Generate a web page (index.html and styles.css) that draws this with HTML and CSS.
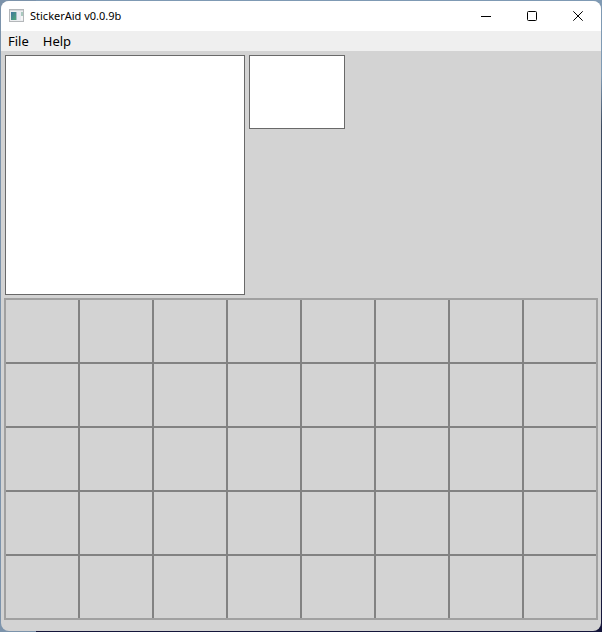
FILE: index.html
```html
<!DOCTYPE html>
<html lang="en">
<head>
<meta charset="utf-8">
<title>StickerAid v0.0.9b</title>
<link rel="stylesheet" href="styles.css">
</head>
<body>
<div class="window">
  <header class="titlebar">
    <svg class="app-icon" viewBox="0 0 16 14" width="16" height="14" aria-hidden="true">
      <defs>
        <linearGradient id="pane" x1="0" y1="0" x2="1" y2="1">
          <stop offset="0" stop-color="#3f74a0"/>
          <stop offset="1" stop-color="#4fa878"/>
        </linearGradient>
      </defs>
      <rect x="0.5" y="0.5" width="14" height="12" fill="#eceef0" stroke="#b4b7ba"/>
      <path d="M1 1.500h13" stroke="#d5d8dc"/>
      <rect x="2" y="3" width="5" height="8" fill="url(#pane)"/>
      <rect x="7" y="3" width="1" height="8" fill="#a9bdc8"/>
      <rect x="8" y="3" width="4" height="8" fill="#e9ebf2"/>
      <rect x="12" y="3" width="2" height="4" fill="#a9c9be"/>
      <rect x="12" y="7" width="2" height="4" fill="#f6f6f6"/>
    </svg>
    <h1 class="title">StickerAid v0.0.9b</h1>
    <div class="controls">
      <button class="control" type="button" aria-label="Minimize">
        <svg viewBox="0 0 10 10" width="10" height="10"><path d="M0 5.500h10"/></svg>
      </button>
      <button class="control" type="button" aria-label="Maximize">
        <svg viewBox="0 0 10 10" width="10" height="10"><rect x="0.5" y="0.5" width="9" height="9" rx="1"/></svg>
      </button>
      <button class="control" type="button" aria-label="Close">
        <svg viewBox="0 0 10 10" width="10" height="10"><path d="M0.300 0.300l9.400 9.400M9.700 0.300l-9.400 9.400"/></svg>
      </button>
    </div>
  </header>
  <nav class="menubar">
    <button class="menu" type="button">File</button>
    <button class="menu" type="button">Help</button>
  </nav>
  <main class="content">
    <div class="previews">
      <div class="preview preview-large"></div>
      <div class="preview preview-small"></div>
    </div>
    <div class="stickers">
      <div class="cell"></div><div class="cell"></div><div class="cell"></div><div class="cell"></div><div class="cell"></div><div class="cell"></div><div class="cell"></div><div class="cell"></div>
      <div class="cell"></div><div class="cell"></div><div class="cell"></div><div class="cell"></div><div class="cell"></div><div class="cell"></div><div class="cell"></div><div class="cell"></div>
      <div class="cell"></div><div class="cell"></div><div class="cell"></div><div class="cell"></div><div class="cell"></div><div class="cell"></div><div class="cell"></div><div class="cell"></div>
      <div class="cell"></div><div class="cell"></div><div class="cell"></div><div class="cell"></div><div class="cell"></div><div class="cell"></div><div class="cell"></div><div class="cell"></div>
      <div class="cell"></div><div class="cell"></div><div class="cell"></div><div class="cell"></div><div class="cell"></div><div class="cell"></div><div class="cell"></div><div class="cell"></div>
    </div>
  </main>
</div>
</body>
</html>
```
FILE: styles.css
```css
* {
  box-sizing: border-box;
}

body {
  display: flex;
  min-height: 100vh;
  margin: 0;
  padding: 1px;
  font-family: "Noto Sans", "Open Sans", sans-serif;
  color: #000;
  background:
    linear-gradient(90deg, #7c93ab 6%, transparent 6%),
    linear-gradient(#7f9ab4 12%, #3c4a60 20%, #14153a);
}

.window {
  display: flex;
  flex: 1;
  flex-direction: column;
  overflow: hidden;
  border-radius: 8px;
  background: #d3d3d3;
}

.titlebar {
  display: flex;
  align-items: center;
  height: 30px;
  padding-left: 8px;
  background: #fff;
}

.title {
  flex: 1;
  margin: 0 0 0 5px;
  font-size: 11px;
  font-weight: 400;
  line-height: 16px;
}

.controls {
  display: flex;
  align-self: stretch;
}

.control {
  display: flex;
  align-items: center;
  justify-content: center;
  width: 46px;
  padding: 0;
  border: 0;
  background: none;
}

.control svg {
  fill: none;
  stroke: #000;
}

.menubar {
  display: flex;
  height: 20px;
  background: #efefef;
}

.menu {
  padding: 0 7px;
  border: 0;
  background: none;
  color: inherit;
  font: 13px/20px "Noto Sans", "Open Sans", sans-serif;
}

.content {
  flex: 1;
  padding: 3px;
}

.previews {
  display: flex;
  align-items: flex-start;
  gap: 4px;
  padding: 1px;
}

.preview {
  border: 1px solid #696969;
  background: #fff;
}

.preview-large {
  width: 240px;
  height: 240px;
}

.preview-small {
  width: 96px;
  height: 74px;
}

.stickers {
  display: grid;
  grid-template-columns: repeat(8, 1fr);
  grid-auto-rows: 62px;
  gap: 2px;
  margin-top: 2px;
  border: 2px solid #a0a0a0;
  background: #828282;
}

.cell {
  background: #d3d3d3;
}
```
